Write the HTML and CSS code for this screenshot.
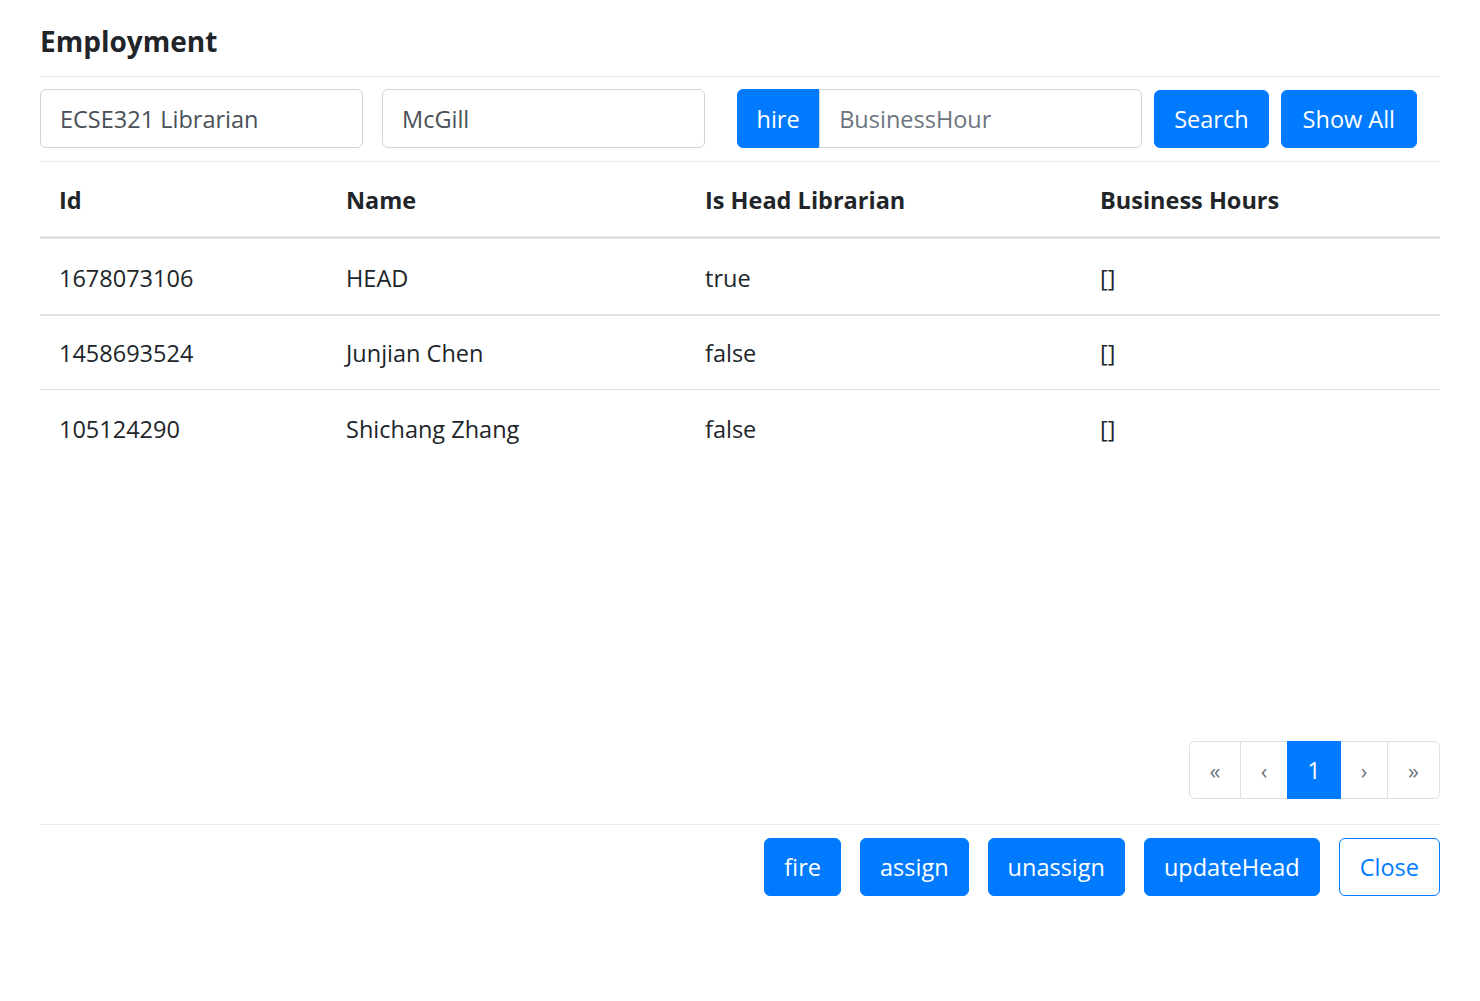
FILE: index.html
```html
<!DOCTYPE html>
<html>
<head>
<meta charset="utf-8">
<title>Employment</title>
<link rel="stylesheet" href="styles.css">
</head>
<body>
<div class="modal">
  <div class="modal-header">
    <h5 class="modal-title">Employment</h5>
  </div>
  <div class="toolbar">
    <input class="form-control w-fixed" type="text" value="ECSE321 Librarian">
    <input class="form-control w-fixed second" type="text" value="McGill">
    <div class="input-group">
      <button class="btn btn-primary btn-join">hire</button>
      <input class="form-control w-fixed joined" type="text" placeholder="BusinessHour">
    </div>
    <button class="btn btn-primary search">Search</button>
    <button class="btn btn-primary showall">Show All</button>
  </div>
  <div class="modal-body">
    <table class="table">
      <thead>
        <tr>
          <th class="c1">Id</th>
          <th class="c2">Name</th>
          <th class="c3">Is Head Librarian</th>
          <th class="c4">Business Hours</th>
        </tr>
      </thead>
      <tbody>
        <tr class="first"><td>1678073106</td><td>HEAD</td><td>true</td><td>[]</td></tr>
        <tr class="second-row"><td>1458693524</td><td>Junjian Chen</td><td>false</td><td>[]</td></tr>
        <tr><td>105124290</td><td>Shichang Zhang</td><td>false</td><td>[]</td></tr>
      </tbody>
    </table>
    <div class="pager-row">
      <ul class="pagination">
        <li class="page-item w51">&laquo;</li>
        <li class="page-item w47">&lsaquo;</li>
        <li class="page-item active w53">1</li>
        <li class="page-item w47">&rsaquo;</li>
        <li class="page-item w52">&raquo;</li>
      </ul>
    </div>
  </div>
  <div class="modal-footer">
    <button class="btn btn-primary">fire</button>
    <button class="btn btn-primary">assign</button>
    <button class="btn btn-primary">unassign</button>
    <button class="btn btn-primary">updateHead</button>
    <button class="btn btn-outline">Close</button>
  </div>
</div>
</body>
</html>
```
FILE: styles.css
```css
* { box-sizing: border-box; }
html, body { margin: 0; padding: 0; background: #fff; }
body {
  font-family: "Open Sans", "Noto Sans", sans-serif;
  font-size: 23.5px;
  line-height: 36px;
  color: #212529;
}
.modal { margin: 0 40px; width: 1400px; }
.modal-header {
  padding: 23px 0 17px;
  border-bottom: 1px solid #e9ecef;
}
.modal-title {
  margin: 0;
  font-size: 28px;
  line-height: 36px;
  font-weight: 700;
}
.toolbar {
  display: flex;
  align-items: center;
  padding: 12px 0 13px;
  border-bottom: 1px solid #e9ecef;
}
.form-control {
  height: 59px;
  padding: 0 19px;
  font-family: inherit;
  font-size: 23.5px;
  color: #495057;
  background: #fff;
  border: 1px solid #ced4da;
  border-radius: 6px;
  outline: none;
}
.form-control::placeholder { color: #6c757d; }
.w-fixed { width: 323px; }
.second { margin-left: 19px; }
.input-group { display: flex; margin-left: 32px; }
.joined { border-top-left-radius: 0; border-bottom-left-radius: 0; }
.btn {
  height: 58px;
  padding: 0 19px;
  font-family: inherit;
  font-size: 23.5px;
  line-height: 36px;
  border-radius: 6px;
  border: 1px solid transparent;
  cursor: pointer;
}
.btn-primary { background: #007bff; border-color: #007bff; color: #fff; }
.btn-outline { background: #fff; border-color: #007bff; color: #007bff; padding: 0 20px; }
.btn-join { border-top-right-radius: 0; border-bottom-right-radius: 0; height: 59px; padding: 0 18.5px; }
.search { margin-left: 12px; }
.showall { margin-left: 12px; padding: 0 21px; }
.table {
  width: 1400px;
  border-collapse: collapse;
  table-layout: fixed;
}
.table th, .table td {
  text-align: left;
  padding: 20.5px 19px 18px;
  vertical-align: top;
}
.table th { font-weight: 700; border-bottom: 3px solid #dee2e6; padding: 20px 19px 18px; }
.table td { border-top: 1px solid #dee2e6; }
.table tr.second-row td { border-top: 2px solid #dee2e6; padding-top: 19.5px; }
.table tr.first td { border-top: none; }
.c1 { width: 287px; }
.c2 { width: 359px; }
.c3 { width: 395px; }
.c4 { width: 359px; }
.pager-row {
  display: flex;
  justify-content: flex-end;
  margin-top: 276px;
  padding-bottom: 25px;
}
.pagination {
  display: flex;
  list-style: none;
  margin: 0;
  padding: 0;
}
.page-item {
  height: 58px;
  display: flex;
  align-items: center;
  justify-content: center;
  border: 1px solid #dee2e6;
  margin-left: -1px;
  color: #6c757d;
  font-size: 22px;
}
.page-item:first-child { border-radius: 6px 0 0 6px; margin-left: 0; }
.page-item:last-child { border-radius: 0 6px 6px 0; }
.page-item.active { background: #007bff; border-color: #007bff; color: #fff; position: relative; z-index: 1; font-size: 23.5px; }
.w51 { width: 52px; }
.w47 { width: 48px; }
.w53 { width: 54px; }
.w52 { width: 53px; }
.modal-footer {
  display: flex;
  justify-content: flex-end;
  gap: 19px;
  padding: 13px 0 0;
  border-top: 1px solid #e9ecef;
}
```
